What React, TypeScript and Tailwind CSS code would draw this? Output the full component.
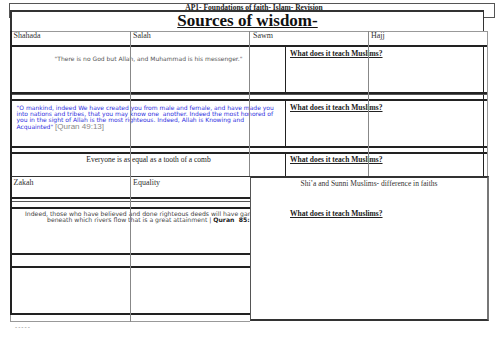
const serif = "font-['Liberation_Serif','Times_New_Roman',serif]";
const sans = "font-['DejaVu_Sans','Verdana',sans-serif]";

function Teach() {
  return (
    <div className={`${serif} text-[7.5px] leading-[8px] font-bold underline text-[#222] whitespace-nowrap`}>
      What does it teach Muslims?
    </div>
  );
}

function Spacer({ h, top }: { h: string; top?: boolean }) {
  return (
    <div className={`${h} flex border-b-2 border-b-[#222] ${top ? "border-t border-t-[#555]" : ""}`}>
      <div className="w-[273px]" />
      <div className="w-[199px] border-r border-[#222]" />
    </div>
  );
}

export default function App() {
  return (
    <div className="relative w-[500px] h-[353px] overflow-hidden bg-white">
      {/* outer frame with the small heading */}
      <div className="ml-[9px] mt-[3px] h-[15px] w-[486px] border border-[#555] flex justify-center">
        <span className={`${serif} text-[7.5px] leading-[7px] font-bold underline text-[#222] ml-[4px]`}>
          AP1- Foundations of faith- Islam- Revision
        </span>
      </div>

      {/* title box */}
      <div className="relative z-10 -mt-[8px] ml-[10px] w-[474px] h-[21px] border-t-2 border-l-2 border-r border-[#333] bg-white text-center leading-none">
        <span className={`${serif} text-[17px] leading-[17px] font-bold underline text-[#111]`}>
          Sources of wisdom-
        </span>
      </div>

      {/* top table */}
      <div className="ml-[10px] w-[478px] border-l-2 border-l-[#222] border-r border-r-[#999] leading-none">
        <div className={`${serif} h-[16px] flex border-t border-t-[#999] border-b-2 border-b-[#222] text-[8px] leading-[7px] text-[#333]`}>
          <div className="w-[118px] pl-[1.5px]">Shahada</div>
          <div className="w-[120px] pl-[3px]">Salah</div>
          <div className="w-[118px] pl-[3px]">Sawm</div>
          <div className="flex-1 pl-[3px]">Hajj</div>
        </div>

        <div className="h-[47px] flex border-b-2 border-b-[#222]">
          <div className={`${sans} w-[273px] pt-[9px] text-center text-[6px] leading-[6px] text-[#555] whitespace-nowrap`}>
            "There is no God but Allah, and Muhammad is his messenger."
          </div>
          <div className="w-[199px] border-l border-r border-[#222] pt-[2.5px] pl-[4px]">
            <Teach />
          </div>
        </div>

        <Spacer h="h-[7px]" top />

        <div className="h-[47px] flex border-b-2 border-b-[#222]">
          <div className={`${sans} w-[273px] pt-[3.5px] pl-[4.5px] text-[6px] leading-[6px] text-[#3030e0] whitespace-nowrap`}>
            <div>"O mankind, indeed We have created you from male and female, and have made you</div>
            <div>into nations and tribes, that you may know one&nbsp; another. Indeed the most honored of</div>
            <div>you in the sight of Allah is the most righteous. Indeed, Allah is Knowing and</div>
            <div className="leading-[8px] mt-[0.5px]">
              Acquainted"{" "}
              <span className="font-['Liberation_Sans',Arial,sans-serif] text-[8px] text-[#888]">[Quran 49:13]</span>
            </div>
          </div>
          <div className="w-[199px] border-l border-r border-[#222] pt-[2.5px] pl-[4px]">
            <Teach />
          </div>
        </div>

        <Spacer h="h-[6px]" />

        <div className="h-[22px] flex">
          <div className={`${serif} w-[273px] pt-[1.5px] text-center text-[7.5px] leading-[8px] text-[#222] whitespace-nowrap`}>
            Everyone is as equal as a tooth of a comb
          </div>
          <div className="w-[199px] border-l border-r border-[#222] pt-[1.5px] pl-[4px]">
            <Teach />
          </div>
        </div>
      </div>

      {/* lower part: left table and the Shi'a / Sunni box */}
      <div className="flex leading-none">
        <div className="ml-[10px] w-[240px] overflow-hidden">
          <div className={`${serif} h-[23px] flex border-t border-t-[#333] border-b-2 border-b-[#222] border-l-2 border-l-[#222] pt-[2px] text-[8px] leading-[7px] text-[#333]`}>
            <div className="w-[118px] pl-[1.5px]">Zakah</div>
            <div className="flex-1 pl-[3px]">Equality</div>
          </div>
          <div className="h-[8px] border-l-2 border-[#222]">
            <div className="h-[3px] border-b border-[#555]" />
          </div>
          <div className={`${sans} h-[48px] border-t-2 border-b-2 border-l-2 border-[#222] pt-[1.5px] text-[6.15px] leading-[6px] text-[#444] whitespace-nowrap`}>
            <div className="ml-[13px]">Indeed, those who have believed and done righteous deeds will have gardens</div>
            <div className="ml-[35px]">
              beneath which rivers flow that is a great attainment | <b className="text-[#222]">Quran&nbsp; 85:11</b>
            </div>
          </div>
          <div className="h-[13px] border-b-2 border-l-2 border-[#222]" />
          <div className="h-[47px] border-b-2 border-l-2 border-[#222]" />
          <div className="h-[7px] border-b border-l border-[#999]" />
        </div>

        <div className="w-[239px] h-[145px] border-t-2 border-b-2 border-l border-r-2 border-[#333] border-l-[#555] border-r-[#777] bg-white">
          <div className={`${serif} pt-[2px] text-center text-[7.5px] leading-[8px] text-[#333]`}>
            Shi’a and Sunni Muslims- difference in faiths
          </div>
          <div className="mt-[22px] pl-[39px]">
            <Teach />
          </div>
        </div>
      </div>

      <div className={`${sans} ml-[15px] mt-[2px] text-[6px] leading-[6px] tracking-[1px] text-[#777]`}>-----</div>

      {/* background table grid lines showing through the text boxes */}
      <div className="absolute left-[130px] top-[31px] h-[291px] w-px bg-[#888] z-20" />
      <div className="absolute left-[249px] top-[31px] h-[145px] w-px bg-[#888] z-20" />
      <div className="absolute left-[368px] top-[31px] h-[145px] w-px bg-[#888] z-20" />
    </div>
  );
}
